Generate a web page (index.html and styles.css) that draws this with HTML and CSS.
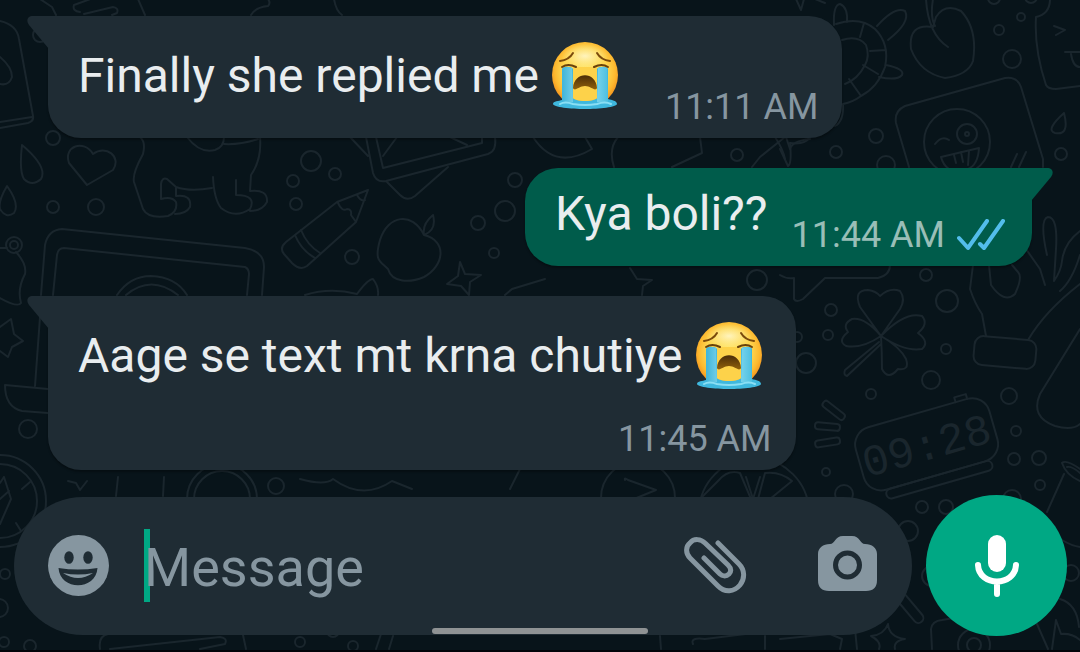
FILE: index.html
```html
<!DOCTYPE html>
<html lang="en">
<head>
    <meta charset="UTF-8">
    <meta name="viewport" content="width=device-width, initial-scale=1.0">
    <title>Chat</title>
    <link rel="stylesheet" href="styles.css">
</head>
<body>
    <!-- Doodle wallpaper -->
    <svg class="wallpaper" viewBox="0 0 1080 652" preserveAspectRatio="xMidYMid slice" aria-hidden="true">
        <!-- bottle, drops, heart -->
        <path d="M0 22Q17 26 19 40L33 117Q34 122 28 124L0 129M0 123L32 118M0 58Q12 68 12 78Q9 87 0 85M40 0L52 8L56 16M138 0L145 16M334 0Q336 12 342 16M251 16Q256 8 268 7Q271 4 268 0"/>
        <path d="M80 13Q72 12 74 6L96 -2M84 15L113 8Q119 9 117 14L112 16"/>
        <path d="M22 146Q19 172 24 180Q32 188 41 180Q48 168 22 146ZM7 187Q-2 202 0 210Q6 220 14 214Q20 205 7 187ZM87 186L69 164C63 147 84 140 93 155C106 145 122 158 113 171Z"/>
        <!-- elephant -->
        <path d="M140 138Q146 143 143 155Q132 175 134 183L143 210Q148 220 168 217Q178 213 176 203Q172 197 161 200V185Q162 178 167 180L176 188Q190 193 212 189M213 178Q214 200 221 209Q235 220 250 210Q257 196 236 196V181M176 188V197Q192 195 190 208Q186 215 175 215M260 138Q262 160 251 176L250 192Q268 190 267 203Q262 212 250 212M187 138Q200 155 215 151Q224 148 224 138M224 145Q240 146 258 140"/>
        <!-- laptop and bear -->
        <path d="M41 296L45 246Q48 231 62 230L245 249Q264 252 264 268L262 296M53 296L57 256Q58 249 64 249L245 268Q249 270 249 275L247 296M117 296Q130 277 151 277Q176 278 187 296M126 296Q151 275 178 296"/>
        <path d="M0 249H7M16 253Q27 265 25 275Q17 290 21 304Q18 309 0 299"/>
        <circle cx="14" cy="246" r="8"/><circle cx="14" cy="246" r="4"/>
        <!-- photos, pencil, apple -->
        <path d="M366 138L373 174Q376 184 386 182L488 155Q497 152 495 138M376 138L383 169L482 144V138M383 157L397 138M450 138L467 146M387 183L400 196Q407 203 415 197L448 168M350 138L368 157"/>
        <path d="M368 191L337 203L286 243Q279 249 284 255L292 264Q300 272 307 267L356 223ZM338 204Q342 213 347 210Q352 210 351 216L356 223M357 196Q361 203 365 201M295 236Q301 251 315 259M301 231Q307 246 320 254"/>
        <path d="M424 236C412 212 388 216 380 241C374 262 380 262 388 270C392 284 410 284 424 278C444 267 448 242 424 236ZM424 236Q422 225 433 216Q437 231 424 236ZM305 296Q330 288 357 295Q368 280 373 280Q379 288 378 296M505 296L512 290L545 280"/>
        <path d="M460 263L465 275L481 276L470 283L469 296L461 287L447 285L458 277Z"/>
        <path d="M533 138Q555 172 592 150L585 138M614 168Q608 150 618 138M700 138L702 154L672 168M752 168L760 158L785 138M775 138Q783 150 785 160M786 138L790 150Q792 142 810 140M630 269L637 280L652 281L643 287L642 296"/>
        <!-- turtle -->
        <path d="M836 25Q860 17 875 30Q890 45 885 68Q878 88 861 97Q853 103 843 105M842 41Q858 36 866 46Q870 57 865 66Q858 80 845 85M864 24L860 38M870 52L886 51M863 66L878 75M849 80L861 97M877 27Q895 7 905 12Q911 23 888 41M834 26Q833 6 840 5Q848 8 847 23M886 66Q905 70 902 76Q897 82 879 78M843 105Q844 122 835 127M780 150L788 167Q792 165 790 144Q805 146 810 138"/>
        <!-- cherry -->
        <path d="M933 28Q908 24 911 50Q920 74 945 79Q968 76 973 62Q978 30 961 12Q945 4 936 18L933 28M926 0Q928 35 948 48M933 0Q930 18 935 27"/>
        <!-- polaroid -->
        <path d="M909 168L896 124Q894 112 905 107L1005 79Q1017 77 1021 88L1043 160V168M935 145Q942 136 949 141M941 158L979 149Q978 166 968 170M941 158Q943 166 949 170M954 156L956 164M961 153L963 163M969 152L968 166M1011 168L1017 155M1019 168L1026 153"/>
        <circle cx="957" cy="143" r="33"/><circle cx="967" cy="135" r="10"/><circle cx="967" cy="135" r="2"/>
        <path d="M1064 114Q1045 131 1055 134Q1070 137 1064 114ZM1050 0Q1050 15 1036 18Q1034 50 1046 86Q1048 90 1056 90L1080 87M1054 27L1065 31L1056 36M1065 53H1080M1071 55Q1073 68 1080 68M796 0L801 11L804 0M815 0L825 4"/>
        <!-- speech bubble, clover, hand -->
        <path d="M780 276Q786 280 794 279V300Q796 304 803 300L825 279H878Q890 276 890 266"/>
        <path d="M881 337L860 308Q853 291 868 291Q876 292 880 297Q890 288 900 292Q906 300 900 310ZM881 337Q905 312 922 317Q929 325 918 334Q930 343 922 350Q905 353 881 337ZM881 337Q865 318 852 320Q842 325 848 333Q837 342 846 347Q862 350 881 337ZM881 337Q882 355 882 370Q888 382 898 370Q910 372 906 360Q900 348 881 337ZM879 343L845 371Q843 376 847 377L881 345"/>
        <path d="M973 266L970 290Q975 305 982 315L986 337M989 266L991 286Q1004 305 1015 295Q1023 278 1018 273L1012 266M1028 341Q1045 312 1080 285M1026 250L1040 270L1045 286M1047 256Q1039 220 1048 218Q1058 218 1056 250L1054 282M1080 232Q1064 244 1062 262Q1061 272 1054 282M1080 256Q1072 282 1060 292M1080 330L1040 395Q1030 418 1055 427Q1072 432 1080 425"/>
        <rect x="974" y="339" width="62" height="29" rx="9" transform="rotate(5 1005 353)"/>
        <!-- alarm clock -->
        <g transform="rotate(-16 926 445)">
            <rect x="857" y="413" width="139" height="65" rx="18"/>
            <rect x="874" y="478" width="110" height="10" rx="5"/>
            <path d="M966 413V408H978V413"/>
            <text class="clock-digits" x="926" y="461" text-anchor="middle">09:28</text>
        </g>
        <rect x="821" y="408" width="26" height="7" rx="3" transform="rotate(38 834 411)"/>
        <rect x="815" y="424" width="25" height="7" rx="3" transform="rotate(5 827 427)"/>
        <rect x="815" y="440" width="25" height="7" rx="3" transform="rotate(-9 827 443)"/>
        <!-- lower right -->
        <path d="M1064 475L1047 513M1062 464Q1066 460 1080 470M1062 464Q1066 476 1080 482M1067 468Q1072 467 1080 474M1062 541Q1072 547 1080 548"/>
        <rect x="892" y="604" width="36" height="10" rx="5" transform="rotate(50 910 609)"/>
        <path d="M888 625Q889 638 905 640Q893 642 895 650M888 625Q884 636 871 637Q882 643 879 650M932 650L931 630Q932 622 942 621L960 618M1037 625L1048 650M1056 621L1061 635Q1072 634 1080 641M1056 621L1052 650M1060 600Q1077 605 1079 628M660 637L661 650M693 645Q690 638 705 640L770 632M765 637V650M780 640L830 635L842 640L840 650M855 630L857 650"/>
        <circle cx="974" cy="646" r="16"/><circle cx="974" cy="646" r="7"/>
        <!-- strip above the composer -->
        <path d="M68 482L76 484L80 491L87 482M118 478L116 497M164 478L163 497M300 480Q325 487 333 480Q363 502 392 482L412 490M625 481Q624 478 628 481L656 491L634 500M718 482Q728 470 740 474L751 500M758 500L765 474Q780 472 792 482L770 500M746 478L753 500L760 478M700 500L718 482M520 470L510 490"/>
        <circle cx="222" cy="500" r="35"/><circle cx="222" cy="500" r="28"/>
        <circle cx="638" cy="499" r="37"/><circle cx="754" cy="514" r="55"/>
        <!-- left edge: star, hat, compass -->
        <path d="M0 328L11 320L14 335L23 342L12 348L8 358L0 352M40 318L35 387M48 390L5 386Q5 408 22 412L48 414M4 478L11 500L0 525M4 478L0 484M0 500L9 492M22 490L30 483M16 524L21 532"/>
        <circle cx="0" cy="502" r="46"/><circle cx="0" cy="502" r="37"/>
        <path d="M100 650Q98 637 108 635L125 635M110 650L220 638Q228 639 225 645L200 650M243 636L246 650M376 650L381 635M389 650L393 637M28 606L32 600L36 607"/>
        <!-- loose dots -->
        <circle cx="40" cy="36" r="7"/><circle cx="53" cy="139" r="7"/><circle cx="53" cy="208" r="6"/><circle cx="96" cy="208" r="8"/>
        <circle cx="311" cy="162" r="10"/><circle cx="293" cy="182" r="6"/><circle cx="335" cy="175" r="6"/><circle cx="296" cy="205" r="6"/>
        <circle cx="352" cy="258" r="7"/><circle cx="515" cy="181" r="7"/><circle cx="505" cy="212" r="10"/><circle cx="478" cy="224" r="7"/>
        <circle cx="494" cy="254" r="5"/><circle cx="737" cy="156" r="6"/><circle cx="836" cy="153" r="6"/><circle cx="876" cy="137" r="7"/>
        <circle cx="886" cy="166" r="9"/><circle cx="999" cy="31" r="5"/><circle cx="1021" cy="18" r="4"/><circle cx="1012" cy="60" r="9"/>
        <circle cx="1061" cy="155" r="6"/><circle cx="994" cy="-1" r="6"/><circle cx="1031" cy="-2" r="6"/><circle cx="757" cy="281" r="10"/>
        <circle cx="926" cy="276" r="6"/><circle cx="947" cy="302" r="11"/><circle cx="831" cy="311" r="6"/><circle cx="828" cy="336" r="5"/>
        <circle cx="797" cy="338" r="5"/><circle cx="806" cy="364" r="10"/><circle cx="946" cy="350" r="5"/><circle cx="931" cy="381" r="9"/>
        <circle cx="871" cy="395" r="5"/><circle cx="1009" cy="397" r="8"/><circle cx="1016" cy="432" r="5"/><circle cx="1014" cy="460" r="6"/>
        <circle cx="1039" cy="459" r="7"/><circle cx="1040" cy="486" r="5"/><circle cx="826" cy="473" r="4"/><circle cx="844" cy="495" r="9"/>
        <circle cx="922" cy="508" r="6"/><circle cx="946" cy="508" r="7"/><circle cx="908" cy="532" r="10"/><circle cx="1071" cy="574" r="8"/>
        <circle cx="932" cy="577" r="10"/><circle cx="1012" cy="500" r="9"/><circle cx="276" cy="487" r="8"/><circle cx="28" cy="430" r="9"/>
        <circle cx="5" cy="575" r="5"/><circle cx="-1" cy="609" r="9"/><circle cx="4" cy="643" r="5"/><circle cx="30" cy="647" r="6"/>
        <circle cx="300" cy="643" r="5"/><circle cx="353" cy="647" r="5"/><circle cx="333" cy="632" r="6"/>
    </svg>

    <!-- Shared emoji drawing -->
    <svg class="defs" width="0" height="0" aria-hidden="true">
        <defs>
            <radialGradient id="face-fill" cx="50%" cy="45%" r="56%">
                <stop offset="0" stop-color="#ffe873"/>
                <stop offset="0.6" stop-color="#fdd650"/>
                <stop offset="0.82" stop-color="#fdb92f"/>
                <stop offset="1" stop-color="#f18a1a"/>
            </radialGradient>
            <radialGradient id="face-shine" cx="50%" cy="50%" r="50%">
                <stop offset="0" stop-color="#fff6c8" stop-opacity="0.9"/>
                <stop offset="1" stop-color="#fff0a0" stop-opacity="0"/>
            </radialGradient>
            <linearGradient id="tear-fill" x1="0" x2="1" y1="0" y2="0">
                <stop offset="0" stop-color="#3fb4d8"/>
                <stop offset="0.5" stop-color="#a4e8f8"/>
                <stop offset="1" stop-color="#4dbfe0"/>
            </linearGradient>
            <linearGradient id="mouth-fill" x1="0" x2="0" y1="0" y2="1">
                <stop offset="0" stop-color="#4a2c08"/>
                <stop offset="1" stop-color="#8f600c"/>
            </linearGradient>
            <symbol id="crying-face" viewBox="0 0 68 68">
                <circle cx="34" cy="33" r="33" fill="url(#face-fill)"/>
                <ellipse cx="34" cy="14" rx="23" ry="12" fill="url(#face-shine)"/>
                <path d="M9 19Q18 18 22 11M46 11Q50 18 59 19" fill="none" stroke="#7a4a0c" stroke-width="2" stroke-linecap="round"/>
                <path d="M11 58V27C11 24 21 24 22 27V56C26 60 42 60 46 56V27C47 24 57 24 57 27V57C61 58 66 59 66 62C66 65 48 67 34 67C20 67 2 65 2 62C2 59 8 59 11 58Z" fill="#3fb8de"/>
                <path d="M12 26Q17 24 21 26L22 60H11ZM47 26Q52 24 56 26L57 60H46Z" fill="url(#tear-fill)"/>
                <path d="M22 25V56C26 60 42 60 46 56V25Z" fill="#fdd24a"/>
                <path d="M11 25Q17 21 25 25M43 25Q51 21 57 25" fill="none" stroke="#6a420a" stroke-width="2" stroke-linecap="round"/>
                <path d="M22 46C23 29 45 29 46 46C44 50 40 44 34 44C28 44 24 50 22 46Z" fill="url(#mouth-fill)"/>
                <path d="M9 62Q14 59 22 62Q34 64 46 62Q54 59 60 62" fill="none" stroke="#8adff4" stroke-width="2" stroke-linecap="round"/>
            </symbol>
        </defs>
    </svg>

    <div class="chat">
        <main class="messages">
            <div class="bubble incoming">
                <svg class="tail" viewBox="0 0 22 34" aria-hidden="true"><path d="M22 0H6C0 0-1 5 2 9L22 33Z"/></svg>
                <p class="text">Finally she replied me <svg class="emoji" role="img" aria-label="Loudly crying face"><use href="#crying-face"/></svg></p>
                <div class="meta"><time datetime="11:11">11:11 AM</time></div>
            </div>

            <div class="bubble outgoing">
                <svg class="tail" viewBox="0 0 22 34" aria-hidden="true"><path d="M0 0H16C22 0 23 5 20 9L0 33Z"/></svg>
                <p class="text">Kya boli??</p>
                <div class="meta">
                    <time datetime="11:44">11:44 AM</time>
                    <svg class="ticks" viewBox="0 0 48 32" role="img" aria-label="Read"><path d="M2 19L11 29L30 2M23 25L27 29L46 2"/></svg>
                </div>
            </div>

            <div class="bubble incoming stacked">
                <svg class="tail" viewBox="0 0 22 34" aria-hidden="true"><path d="M22 0H6C0 0-1 5 2 9L22 33Z"/></svg>
                <p class="text">Aage se text mt krna chutiye <svg class="emoji" role="img" aria-label="Loudly crying face"><use href="#crying-face"/></svg></p>
                <div class="meta"><time datetime="11:45">11:45 AM</time></div>
            </div>
        </main>

        <form class="composer">
            <div class="field">
                <button type="button" class="icon-btn" aria-label="Emoji">
                    <svg width="61" height="61" viewBox="0 0 61 61">
                        <circle cx="30.5" cy="30.5" r="30.5" fill="#8696a0"/>
                        <ellipse cx="21" cy="22.5" rx="4.7" ry="6.3" fill="#1f2c34"/>
                        <ellipse cx="40" cy="22.5" rx="4.7" ry="6.3" fill="#1f2c34"/>
                        <path d="M10.5 33Q30 36 49.500 33C48 56 12 56 10.500 33Z" fill="#1f2c34"/>
                        <path d="M15 38Q30 41 45 38Q30 48 15 38Z" fill="#8696a0"/>
                    </svg>
                </button>
                <div class="entry">
                    <span class="caret"></span>
                    <input type="text" placeholder="Message" aria-label="Message">
                </div>
                <button type="button" class="icon-btn" aria-label="Attach">
                    <svg width="63" height="57" viewBox="0 0 63 57" fill="none" stroke="#8696a0" stroke-width="5" stroke-linecap="round" stroke-linejoin="round">
                        <path d="M34 6L55 27C61 33 61 42 56 48C50 55 41 56 34 49L6 21C1 16 2 9 6 6C10 1 17 2 21 6L44 28C48 32 47 35 45 37C42 40 38 39 36 37L20 21"/>
                    </svg>
                </button>
                <button type="button" class="icon-btn camera" aria-label="Camera">
                    <svg width="59" height="59" viewBox="0 0 59 59">
                        <path d="M12 8C17 8 17 0 25 0H34C42 0 42 8 47 8C54 8 59 12 59 18V44Q59 55 48 55H11Q0 55 0 44V18C0 12 5 8 12 8Z" fill="#8696a0"/>
                        <circle cx="29.5" cy="29" r="12" fill="none" stroke="#1f2c34" stroke-width="5"/>
                    </svg>
                </button>
            </div>
            <button type="button" class="mic" aria-label="Record voice message">
                <svg width="44" height="62" viewBox="0 0 44 62">
                    <rect x="13" y="0" width="18" height="37" rx="9" fill="#fff"/>
                    <path d="M3 30C4 52 40 52 41 30M22 47V59" fill="none" stroke="#fff" stroke-width="6" stroke-linecap="round"/>
                </svg>
            </button>
        </form>
    </div>
    <div class="home-bar"></div>
</body>
</html>
```
FILE: styles.css
```css
* {
    box-sizing: border-box;
}
body {
    margin: 0;
    position: relative;
    min-height: 100vh;
    background: #08141a;
    font-family: Roboto, "Liberation Sans", sans-serif;
    color: #e9edef;
}
.wallpaper {
    position: absolute;
    top: 0;
    left: 0;
    width: 100%;
    height: 100%;
    border-bottom: 2px solid #010409;
    fill: none;
    stroke: #1a262d;
    stroke-width: 2px;
    stroke-linecap: round;
    stroke-linejoin: round;
}
.clock-digits {
    font-family: "Liberation Mono", monospace;
    font-size: 44px;
    fill: #1a262d;
    stroke: none;
}
.defs {
    position: absolute;
}
.chat {
    position: relative;
    display: flex;
    flex-direction: column;
    min-height: 100vh;
}

/* messages */
.messages {
    flex: 1;
    display: flex;
    flex-direction: column;
    gap: 30px;
    padding: 16px 48px 0;
}
.bubble {
    position: relative;
    display: flex;
    align-items: flex-end;
    padding: 26px 24px 10px 30px;
    border-radius: 33px;
    box-shadow: 0 2px 2px rgba(0, 0, 0, 0.3);
}
.incoming {
    align-self: flex-start;
    gap: 46px;
    background: #1f2c34;
    border-top-left-radius: 0;
}
.outgoing {
    align-self: flex-end;
    gap: 24px;
    padding-top: 12px;
    padding-right: 27px;
    background: #005c4b;
    border-top-right-radius: 0;
}
.stacked {
    flex-direction: column;
    gap: 28px;
}
.tail {
    position: absolute;
    top: 0;
    width: 22px;
    height: 34px;
}
.incoming .tail {
    right: 100%;
    margin-right: -1px;
    fill: #1f2c34;
}
.outgoing .tail {
    left: 100%;
    margin-left: -1px;
    fill: #005c4b;
}
.text {
    display: flex;
    align-items: center;
    align-self: flex-start;
    gap: 12px;
    min-height: 68px;
    margin: 0;
    font-size: 48px;
    line-height: 56px;
}
.incoming .text {
    margin-bottom: 18px;
}
.outgoing .text {
    margin-bottom: 8px;
}
.stacked .text {
    margin: 0 9px 0 0;
}
.emoji {
    flex: none;
    width: 68px;
    height: 68px;
}
.meta {
    display: flex;
    align-items: center;
    gap: 12px;
    font-size: 36px;
    line-height: 42px;
    color: #8696a0;
    white-space: nowrap;
}
.outgoing .meta {
    color: #99beb7;
}
.ticks {
    width: 48px;
    height: 32px;
    fill: none;
    stroke: #53bdeb;
    stroke-width: 4px;
    stroke-linecap: round;
    stroke-linejoin: round;
}

/* composer */
.composer {
    display: flex;
    align-items: center;
    gap: 14px;
    padding: 24px 13px 16px 14px;
}
.field {
    flex: 1;
    display: flex;
    align-items: center;
    min-width: 0;
    height: 138px;
    padding: 0 35px 0 34px;
    border-radius: 69px;
    background: #1f2c34;
}
.icon-btn,
.mic {
    display: flex;
    align-items: center;
    justify-content: center;
    flex: none;
    padding: 0;
    border: 0;
    background: none;
    cursor: pointer;
}
.camera {
    margin-left: 71px;
}
.entry {
    position: relative;
    flex: 1;
    min-width: 0;
    margin-left: 35px;
}
.entry input {
    position: relative;
    display: block;
    width: 100%;
    height: 73px;
    padding: 4px 0 0;
    border: 0;
    outline: 0;
    background: none;
    color: #e9edef;
    caret-color: #00a884;
    font-family: inherit;
    font-size: 54px;
}
.entry input::placeholder {
    color: #8696a0;
    opacity: 1;
}
.caret {
    position: absolute;
    top: 0;
    left: 0;
    width: 6px;
    height: 73px;
    background: #00a884;
}
.mic {
    width: 141px;
    height: 141px;
    border-radius: 50%;
    background: #00a884;
}
.home-bar {
    position: absolute;
    bottom: 18px;
    left: 40%;
    width: 20%;
    height: 6px;
    border-radius: 3px;
    background: #8f9394;
}
```
